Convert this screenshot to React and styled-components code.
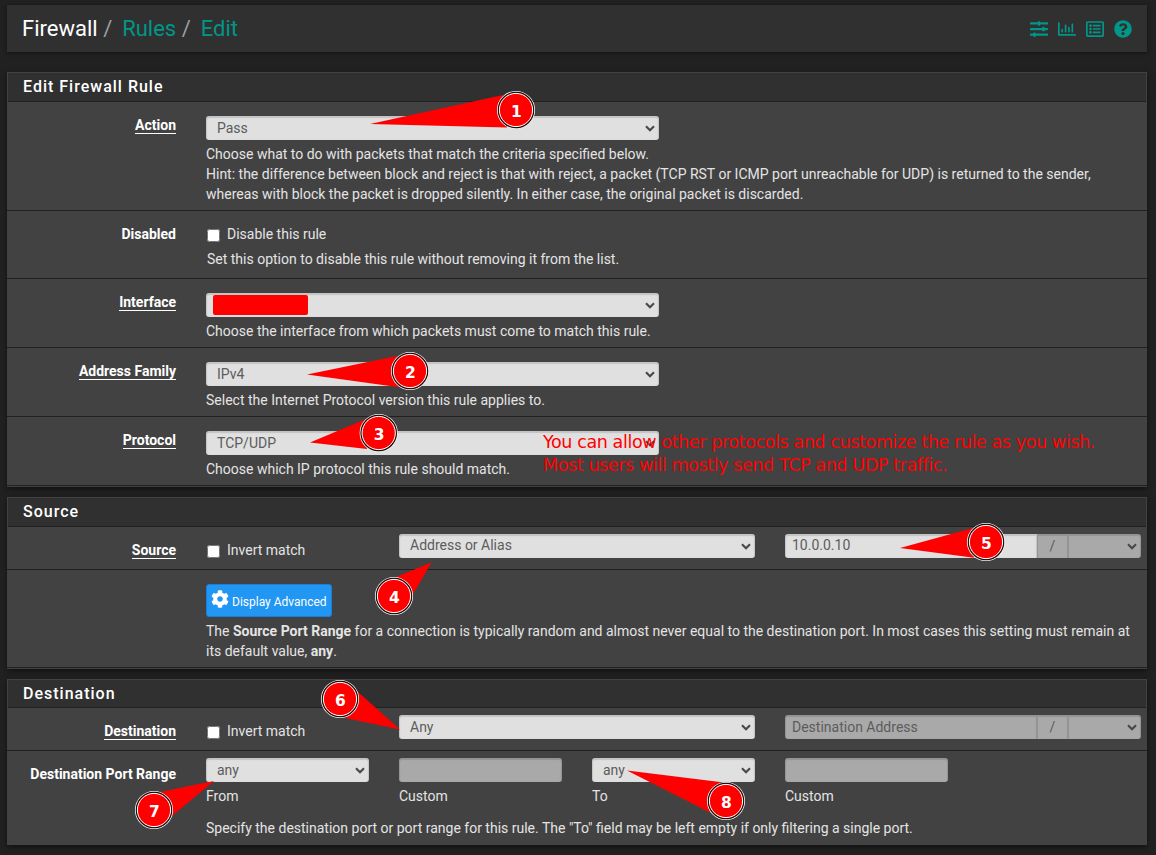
import React from "react";
import styled, { createGlobalStyle, css } from "styled-components";
import { FaSlidersH, FaRegChartBar, FaRegListAlt, FaQuestionCircle, FaCog } from "react-icons/fa";

const GlobalStyle = createGlobalStyle`
  *, *::before, *::after { box-sizing: border-box; }
  body {
    margin: 0;
    background: #212121;
    color: #e4e4e4;
    font: 14px/20px Roboto, sans-serif;
    overflow: hidden;
  }
`;

const Page = styled.main`
  position: relative;
  width: 1156px;
  height: 855px;
  padding: 5px 9px 0 7px;
  overflow: hidden;
`;

const Header = styled.header`
  display: flex;
  align-items: center;
  justify-content: space-between;
  height: 47px;
  padding: 0 15px;
  margin-bottom: 20px;
  background: #303030;
  box-shadow: 0 1px 4px rgba(0, 0, 0, 0.45);
`;

const Crumbs = styled.nav`
  display: flex;
  font-size: 22px;
  line-height: 46px;
  color: #fff;
`;

const CrumbLink = styled.a`
  color: #009688;
  &::before {
    content: "/";
    display: inline-block;
    width: 19px;
    margin-left: 5.5px;
    color: #9e9e9e;
  }
`;

const Tools = styled.div`
  display: flex;
  gap: 10px;
  padding-top: 1px;
  color: #009688;
  svg { display: block; width: 18px; height: 18px; }
`;

const Panel = styled.section`
  margin-bottom: 10px;
  border: 1px solid #424242;
  background: #424242;
  box-shadow: 0 2px 5px rgba(0, 0, 0, 0.5);
`;

const PanelTitle = styled.h2`
  height: ${(p) => p.$height || 29}px;
  margin: 0;
  padding-left: 15px;
  border-bottom: 1px solid #212121;
  background: #303030;
  color: #fff;
  font-size: 16px;
  font-weight: 500;
  line-height: 28px;
  letter-spacing: 1px;
`;

const Row = styled.div`
  display: grid;
  grid-template-columns: 168px 1fr;
  column-gap: 30px;
  height: ${(p) => p.$height}px;
  margin: 0 -1px;
  padding: ${(p) => p.$top}px 6px 0 1px;
  border-bottom: ${(p) => (p.$last ? "0" : "1px solid #212121")};
`;

const Label = styled.div`
  justify-self: end;
  align-self: start;
  margin-top: ${(p) => p.$offset || 0}px;
  height: 18px;
  color: #fff;
  font-weight: 700;
  line-height: 18px;
  border-bottom: ${(p) => (p.$required ? "1px solid #fff" : "0")};
`;

const Columns = styled.div`
  display: grid;
  grid-template-columns: repeat(5, 163px);
  column-gap: 30px;
`;

const Cell = styled.div`
  grid-column: span ${(p) => p.$span || 1};
`;

const control = css`
  display: flex;
  align-items: center;
  height: 24px;
  border-radius: 3px;
  background: ${(p) => (p.$disabled ? "#a9a9a9" : "#e0e0e0")};
  box-shadow: inset 0 1px 1px 1px rgba(0, 0, 0, 0.13);
  color: #5c5c5c;
`;

const SelectBox = styled.div`
  ${control}
  justify-content: space-between;
  width: ${(p) => p.$width || "100%"};
  padding: 0 4px 0 11px;
  svg { width: 10px; height: 7px; }
`;

const Value = styled.span`
  display: flex;
  padding-bottom: ${(p) => (p.$raised ? 2 : 0)}px;
`;

const Field = styled.div`
  ${control}
  padding: 0 7px;
`;

const AddressGroup = styled.div`
  display: grid;
  grid-template-columns: 252px 31px 73px;
  ${Field} { border-radius: 3px 0 0 3px; }
  ${SelectBox} { border-radius: 0 3px 3px 0; }
`;

const Addon = styled.div`
  ${control}
  justify-content: center;
  border-radius: 0;
  background: #a9a9a9;
`;

const Redaction = styled.span`
  width: 95px;
  height: 20px;
  margin-left: -4px;
  border-radius: 2px;
  background: #f00;
`;

const Help = styled.p`
  margin: ${(p) => p.$gap ?? 4}px 0 0 ${(p) => p.$indent || 0}px;
  white-space: nowrap;
`;

const CheckLabel = styled.label`
  display: flex;
  align-items: center;
  gap: 7px;
  margin-top: ${(p) => p.$offset || 0}px;
  height: 20px;
  input { width: 13px; height: 13px; margin: 3px 0 0 1px; }
`;

const PrimaryButton = styled.button`
  display: flex;
  align-items: center;
  width: 126px;
  height: 33px;
  padding: 0 0 0 4px;
  border: 1px solid #1a7fdc;
  border-radius: 3px;
  background: #2196f3;
  color: #fff;
  font: 12px/18px Roboto, sans-serif;
  white-space: nowrap;
  svg { flex: none; width: 18px; height: 18px; margin: -3px 3px 0 0; }
  span { padding-top: 3px; }
`;

const Overlay = styled.svg`
  position: absolute;
  inset: 0;
  width: 1156px;
  height: 855px;
  pointer-events: none;
  text { font-family: "DejaVu Sans", sans-serif; }
`;

const Note = styled.p`
  position: absolute;
  left: 543px;
  top: 431px;
  margin: 0;
  color: #f00;
  font: 17.5px/23px "DejaVu Sans", sans-serif;
  letter-spacing: -0.39px;
  white-space: nowrap;
`;

function Chevron() {
  return (
    <svg viewBox="0 0 10 7" fill="none" stroke="#484848" strokeWidth="2.1">
      <path d="M1 1.2 5 5.2 9 1.2" />
    </svg>
  );
}

function Select({ children, disabled, width, raised }) {
  return (
    <SelectBox role="combobox" $disabled={disabled} $width={width}>
      <Value $raised={raised}>{children}</Value>
      <Chevron />
    </SelectBox>
  );
}

function Checkbox({ children, offset }) {
  return (
    <CheckLabel $offset={offset}>
      <input type="checkbox" />
      {children}
    </CheckLabel>
  );
}

function Address({ children, disabled, raised }) {
  return (
    <AddressGroup>
      <Field $disabled={disabled}><Value $raised={raised}>{children}</Value></Field>
      <Addon>/</Addon>
      <Select disabled />
    </AddressGroup>
  );
}

const callouts = [
  { n: 1, x: 516, y: 110, points: "370,124 503,95 507,127.5" },
  { n: 2, x: 410, y: 371, points: "307,374.5 397,356 399,387.3" },
  { n: 3, x: 378.7, y: 433, points: "310,442.5 366,419 367,449" },
  { n: 4, x: 394, y: 596, points: "431.5,562.5 396,577 412,596" },
  { n: 5, x: 986, y: 542, points: "900,548 973,528 974,557.7" },
  { n: 6, x: 340, y: 699, points: "400,729.5 358,692 345,718" },
  { n: 7, x: 154, y: 810, points: "214,781 160,792 172,816" },
  { n: 8, x: 726, y: 801, points: "627,770.5 720,782 710,812.5" },
];

function Callout({ n, x, y, points }) {
  return (
    <g>
      <polygon points={points} fill="#f00" />
      <circle cx={x} cy={y} r="18.5" fill="#f00" stroke="#eee" strokeWidth="1.2" />
      <circle cx={x} cy={y} r="17.6" fill="#f00" stroke="#111" strokeWidth="1.3" />
      <circle cx={x} cy={y} r="16.6" fill="#f00" stroke="#fff" strokeWidth="1" />
      <text x={x + 0.5} y={y + 6.7} fill="#fff" fontSize="15.5" fontWeight="700" textAnchor="middle">{n}</text>
    </g>
  );
}

export default function App() {
  return (
    <Page>
      <GlobalStyle />
      <Header>
        <Crumbs>
          Firewall<CrumbLink>Rules</CrumbLink><CrumbLink>Edit</CrumbLink>
        </Crumbs>
        <Tools>
          <FaSlidersH />
          <FaRegChartBar />
          <FaRegListAlt />
          <FaQuestionCircle />
        </Tools>
      </Header>

      <Panel>
        <PanelTitle>Edit Firewall Rule</PanelTitle>
        <Row $height={109} $top={14}>
          <Label $required>Action</Label>
          <div>
            <Select width="453px">Pass</Select>
            <Help>
              Choose what to do with packets that match the criteria specified below.<br />
              Hint: the difference between block and reject is that with reject, a packet (TCP RST or ICMP port unreachable for UDP) is returned to the sender,<br />
              whereas with block the packet is dropped silently. In either case, the original packet is discarded.
            </Help>
          </div>
        </Row>
        <Row $height={68} $top={13}>
          <Label $offset={1}>Disabled</Label>
          <div>
            <Checkbox>Disable this rule</Checkbox>
            <Help $gap={5} $indent={1}>Set this option to disable this rule without removing it from the list.</Help>
          </div>
        </Row>
        <Row $height={69} $top={14}>
          <Label $required>Interface</Label>
          <div>
            <Select width="453px"><Redaction /></Select>
            <Help>Choose the interface from which packets must come to match this rule.</Help>
          </div>
        </Row>
        <Row $height={69} $top={14}>
          <Label $required>Address Family</Label>
          <div>
            <Select width="453px">IPv4</Select>
            <Help>Select the Internet Protocol version this rule applies to.</Help>
          </div>
        </Row>
        <Row $height={69} $top={14}>
          <Label $required>Protocol</Label>
          <div>
            <Select width="453px">TCP/UDP</Select>
            <Help>Choose which IP protocol this rule should match.</Help>
          </div>
        </Row>
      </Panel>

      <Panel>
        <PanelTitle>Source</PanelTitle>
        <Row $height={43} $top={7}>
          <Label $required $offset={7}>Source</Label>
          <Columns>
            <Cell><Checkbox offset={6}>Invert match</Checkbox></Cell>
            <Cell $span={2}><Select raised>Address or Alias</Select></Cell>
            <Cell $span={2}><Address raised>10.0.0.10</Address></Cell>
          </Columns>
        </Row>
        <Row $height={98} $top={14}>
          <span />
          <div>
            <PrimaryButton><FaCog /><span>Display Advanced</span></PrimaryButton>
            <Help>
              The <b>Source Port Range</b> for a connection is typically random and almost never equal to the destination port. In most cases this setting must remain at<br />
              its default value, <b>any</b>.
            </Help>
          </div>
        </Row>
      </Panel>

      <Panel>
        <PanelTitle $height={28}>Destination</PanelTitle>
        <Row $height={43} $top={7}>
          <Label $required $offset={7}>Destination</Label>
          <Columns>
            <Cell><Checkbox offset={6}>Invert match</Checkbox></Cell>
            <Cell $span={2}><Select>Any</Select></Cell>
            <Cell $span={2}><Address disabled>Destination Address</Address></Cell>
          </Columns>
        </Row>
        <Row $height={93} $top={7} $last>
          <Label $offset={7}>Destination Port Range</Label>
          <div>
            <Columns>
              <Cell><Select>any</Select><Help>From</Help></Cell>
              <Cell><Field $disabled /><Help>Custom</Help></Cell>
              <Cell><Select>any</Select><Help>To</Help></Cell>
              <Cell><Field $disabled /><Help>Custom</Help></Cell>
            </Columns>
            <Help $gap={12}>Specify the destination port or port range for this rule. The "To" field may be left empty if only filtering a single port.</Help>
          </div>
        </Row>
      </Panel>

      <Note>
        You can allow other protocols and customize the rule as you wish.<br />
        Most users will mostly send TCP and UDP traffic.
      </Note>
      <Overlay viewBox="0 0 1156 855">
        {callouts.map((c) => <Callout key={c.n} {...c} />)}
      </Overlay>
    </Page>
  );
}
